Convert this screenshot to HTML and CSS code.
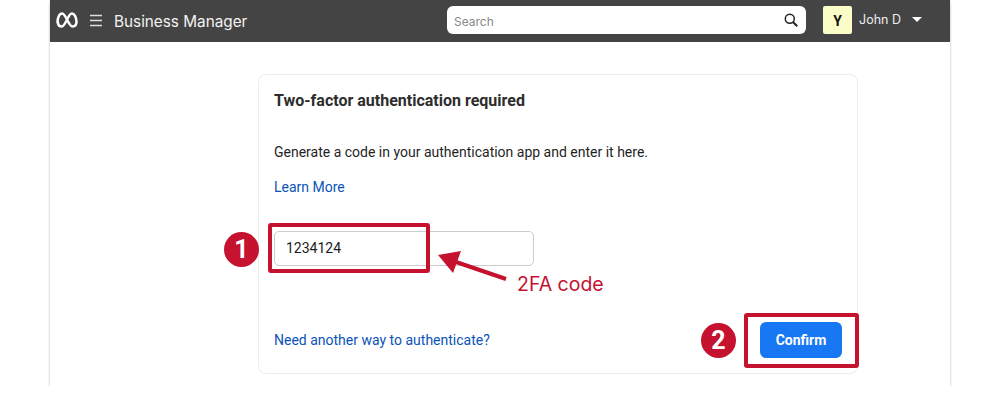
FILE: index.html
```html
<!DOCTYPE html>
<html lang="en">
<head>
  <meta charset="UTF-8">
  <meta name="viewport" content="width=device-width, initial-scale=1.0">
  <title>Business Manager - Two-factor authentication</title>
  <link rel="stylesheet" href="styles.css">
</head>
<body>
  <div class="window">
    <header class="topbar">
      <svg class="meta-logo" width="22" height="16" viewBox="0 0 22 16" fill="none" stroke="#fff" stroke-width="2.500" stroke-linecap="round" stroke-linejoin="round">
        <path d="M1.500 10.500C1.500 5.500 3.500 1.500 6.200 1.500c3.600 0 6.300 13 10.300 13 2.600 0 4-1.900 4-4.700 0-4.300-2-8.300-4.700-8.300-3.700 0-6.300 13-9.900 13-2.500 0-3.900-1.600-3.900-4z"/>
      </svg>
      <svg class="menu-icon" width="12" height="13" viewBox="0 0 12 13" stroke="#ddd" stroke-width="1.500">
        <path d="M0 1.500h12M0 6.500h12M0 11.500h12"/>
      </svg>
      <div class="app-name">Business Manager</div>
      <div class="search">
        <span>Search</span>
        <svg width="14" height="14" viewBox="0 0 14 14" fill="none" stroke="#222" stroke-width="1.500">
          <circle cx="5.800" cy="5.800" r="4.500"/>
          <path d="M9.200 9.200l4 4" stroke-width="2"/>
        </svg>
      </div>
      <div class="avatar">Y</div>
      <div class="user-name">John D</div>
      <div class="caret"></div>
    </header>

    <main>
      <div class="card">
        <h2>Two-factor authentication required</h2>
        <p>Generate a code in your authentication app and enter it here.</p>
        <a class="learn" href="#">Learn More</a>
        <div class="code-input">1234124</div>
        <div class="card-foot">
          <a href="#">Need another way to authenticate?</a>
          <button>Confirm</button>
        </div>
      </div>
    </main>
  </div>

  <!-- screenshot annotations -->
  <div class="mark box-one"></div>
  <div class="mark box-two"></div>
  <div class="step step-one">1</div>
  <div class="step step-two">2</div>
  <svg class="arrow" width="70" height="36" viewBox="0 0 70 36">
    <path d="M68 29L18 12" stroke="#c4122f" stroke-width="4"/>
    <path d="M0 5L23 1L15 23z" fill="#c4122f"/>
  </svg>
  <div class="arrow-label">2FA code</div>
</body>
</html>
```

FILE: styles.css
```css
body {
  font-family: Roboto, "Liberation Sans", sans-serif;
  background-color: #fff;
  color: #222;
  margin: 0;
  padding: 0;
}
.window {
  width: 900px;
  height: 386px;
  margin: 0 auto;
  background: #fff;
  box-shadow: 0 3px 3px -1px rgba(0, 0, 0, 0.4), 0 0 3px rgba(0, 0, 0, 0.1);
}
.topbar {
  display: flex;
  align-items: center;
  height: 42px;
  background: #444;
  color: #fff;
  padding-left: 5px;
  box-sizing: border-box;
}
.meta-logo {
  margin-left: 1px;
  margin-right: 12px;
  margin-bottom: 3px;
}
.menu-icon {
  margin-right: 12px;
  margin-bottom: 1px;
}
.app-name {
  font-family: Inter, sans-serif;
  font-size: 15.300px;
  width: 333px;
  color: #f2f2f2;
}
.search {
  display: flex;
  align-items: center;
  justify-content: space-between;
  width: 359px;
  height: 28px;
  margin-bottom: 2px;
  background: #fff;
  border-radius: 6px;
  padding: 0 8px 0 7px;
  box-sizing: border-box;
  font-family: Inter, sans-serif;
  font-size: 12px;
  color: #888;
}
.search span {
  margin-top: 2px;
}
.avatar {
  width: 29px;
  height: 28px;
  margin-left: 17px;
  margin-bottom: 2px;
  background: #fbfdc8;
  border-radius: 2px;
  color: #111;
  font-size: 14px;
  font-weight: 700;
  line-height: 30px;
  text-align: center;
}
.user-name {
  font-family: Inter, sans-serif;
  font-size: 12.500px;
  margin-left: 7px;
  margin-bottom: 4px;
  color: #eee;
}
.caret {
  width: 0;
  height: 0;
  margin-left: 11px;
  margin-bottom: 4px;
  border-left: 5px solid transparent;
  border-right: 5px solid transparent;
  border-top: 5px solid #fff;
}
main {
  padding: 32px 0 0 208px;
}
.card {
  width: 600px;
  height: 300px;
  padding: 17px 15px 16px;
  box-sizing: border-box;
  border: 1px solid #ececec;
  border-radius: 8px;
  display: flex;
  flex-direction: column;
  align-items: flex-start;
  font-size: 14px;
}
.card h2 {
  font-size: 16px;
  font-weight: 700;
  line-height: 18px;
  margin: 0;
  color: #2d2d2d;
}
.card p {
  margin: 33px 0 0;
  line-height: 18px;
  color: #1f1f1f;
}
.card a {
  color: #0a54b8;
  text-decoration: none;
}
.learn {
  margin-top: 17px;
  line-height: 18px;
}
.code-input {
  width: 260px;
  height: 35px;
  margin-top: 35px;
  padding-left: 11px;
  box-sizing: border-box;
  border: 1px solid #ccc;
  border-radius: 5px;
  line-height: 33px;
  color: #1c1c1c;
}
.card-foot {
  display: flex;
  align-items: center;
  justify-content: space-between;
  align-self: stretch;
  margin-top: 56px;
}
button {
  width: 82px;
  height: 36px;
  border: 0;
  border-radius: 6px;
  background: #1877f2;
  color: #fff;
  font-family: Roboto, sans-serif;
  font-size: 14px;
  font-weight: 700;
}

/* annotations, drawn over the page */
.mark {
  position: absolute;
  box-sizing: border-box;
  border: 4px solid #c4122f;
  border-radius: 3px;
}
.box-one {
  left: 268px;
  top: 223px;
  width: 162px;
  height: 50px;
}
.box-two {
  left: 744px;
  top: 313px;
  width: 115px;
  height: 55px;
}
.step {
  position: absolute;
  width: 35px;
  height: 35px;
  border-radius: 50%;
  background: #c4122f;
  color: #fff;
  font-size: 25px;
  font-weight: 700;
  line-height: 35px;
  text-align: center;
}
.step-one {
  left: 224px;
  top: 232px;
}
.step-two {
  left: 701px;
  top: 323px;
}
.arrow {
  position: absolute;
  left: 438px;
  top: 250px;
}
.arrow-label {
  position: absolute;
  left: 517px;
  top: 272px;
  font-family: Inter, sans-serif;
  font-size: 19.500px;
  line-height: 24px;
  color: #c4122f;
}
```
